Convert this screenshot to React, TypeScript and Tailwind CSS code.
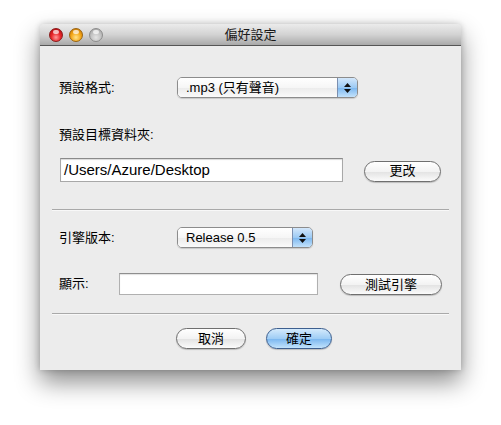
import React from "react";

const font = { fontFamily: '"Liberation Sans", "Noto Sans CJK TC", sans-serif' };

function Light({ kind }: { kind: "red" | "yellow" | "gray" }) {
  const cls =
    kind === "red"
      ? "bg-[radial-gradient(circle_at_50%_70%,#ff9a9a_0%,#e8262a_45%,#a8070c_100%)] border-[#8a1a1a]"
      : kind === "yellow"
      ? "bg-[radial-gradient(circle_at_50%_70%,#ffe38a_0%,#f3a413_50%,#b96a05_100%)] border-[#9a6410]"
      : "bg-[radial-gradient(circle_at_50%_70%,#e4e4e4_0%,#c2c2c2_50%,#9c9c9c_100%)] border-[#8c8c8c]";
  return (
    <div className={`relative w-[14px] h-[14px] rounded-full border ${cls}`}>
      <div className="absolute left-[3px] top-[1px] w-[6px] h-[4px] rounded-full bg-white/70" />
    </div>
  );
}

function Popup({ label, width }: { label: string; width: string }) {
  return (
    <div
      className={`${width} h-[21px] flex rounded-[5px] border border-[#8c8c8c] overflow-hidden shadow-[0_1px_1px_rgba(0,0,0,0.15)]`}
    >
      <div className="flex-1 flex items-center pl-[8px] text-[13px] text-black bg-[linear-gradient(#ffffff,#f6f6f6_50%,#ebebeb_51%,#fafafa)]">
        {label}
      </div>
      <div className="w-[20px] flex flex-col items-center justify-center gap-[2px] border-l border-[#7b8fb0] bg-[linear-gradient(#d3e7fb,#9ccaf4_50%,#7ab6ef_51%,#c3e2fb)]">
        <svg width="7" height="4" viewBox="0 0 7 4"><path d="M3.5 0 L7 4 L0 4 Z" fill="#111" /></svg>
        <svg width="7" height="4" viewBox="0 0 7 4"><path d="M0 0 L7 0 L3.5 4 Z" fill="#111" /></svg>
      </div>
    </div>
  );
}

function AquaButton({ label, width, blue }: { label: string; width: string; blue?: boolean }) {
  const cls = blue
    ? "border-[#3d5f8f] bg-[linear-gradient(#d4eafc,#9fcdf5_50%,#78b5ef_51%,#c2e3fc)]"
    : "border-[#6f6f6f] bg-[linear-gradient(#ffffff,#f3f3f3_50%,#e2e2e2_51%,#fbfbfb)]";
  return (
    <div
      className={`${width} h-[21px] rounded-full border flex items-center justify-center text-[13px] text-black shadow-[0_1px_1px_rgba(0,0,0,0.2)] ${cls}`}
    >
      {label}
    </div>
  );
}

function Separator() {
  return <div className="-mx-[7px] h-[1px] bg-[#a9a9a9] shadow-[0_1px_0_#f8f8f8]" />;
}

export default function App() {
  return (
    <div className="w-[501px] h-[425px] bg-white pt-[24px] pl-[40px]" style={font}>
      <div className="w-[421px] h-[346px] flex flex-col bg-[#ececec] shadow-[0_12px_24px_rgba(0,0,0,0.45),0_0_6px_rgba(0,0,0,0.2)] rounded-t-[4px] overflow-hidden">
        <div className="relative h-[22px] flex items-center justify-center bg-[linear-gradient(#ebebeb,#d3d3d3_50%,#a9a9a9)] border-b border-[#555555]">
          <div className="absolute left-[9px] top-[4px] flex gap-[6px]">
            <Light kind="red" />
            <Light kind="yellow" />
            <Light kind="gray" />
          </div>
          <span className="text-[13px] text-[#1a1a1a]">偏好設定</span>
        </div>
        <div className="flex-1 flex flex-col px-[19px] pt-[31px] text-[13px] text-black">
          <div className="flex items-center h-[21px]">
            <div className="w-[118px]">預設格式:</div>
            <Popup label=".mp3 (只有聲音)" width="w-[181px]" />
          </div>
          <div className="mt-[29px] h-[16px] leading-[16px]">預設目標資料夾:</div>
          <div className="mt-[15px] flex items-center">
            <div className="ml-[1px] w-[283px] h-[24px] bg-white border border-[#a8a8a8] border-t-[#8a8a8a] shadow-[inset_0_1px_1px_rgba(0,0,0,0.15)] flex items-center pl-[3px] text-[15px]">
              /Users/Azure/Desktop
            </div>
            <div className="ml-[21px] mt-[2px]">
              <AquaButton label="更改" width="w-[77px]" />
            </div>
          </div>
          <div className="mt-[27px]">
            <Separator />
          </div>
          <div className="mt-[17px] flex items-center h-[21px]">
            <div className="w-[118px]">引擎版本:</div>
            <Popup label="Release 0.5" width="w-[136px]" />
          </div>
          <div className="mt-[24px] flex items-center">
            <div className="w-[60px]">顯示:</div>
            <div className="w-[200px] h-[22px] bg-white border border-[#b0b0b0] border-t-[#8e8e8e] shadow-[inset_0_1px_1px_rgba(0,0,0,0.12)]" />
            <div className="ml-[22px] mt-[2px]">
              <AquaButton label="測試引擎" width="w-[102px]" />
            </div>
          </div>
          <div className="mt-[18px]">
            <Separator />
          </div>
          <div className="mt-[14px] flex">
            <div className="ml-[117px]">
              <AquaButton label="取消" width="w-[70px]" />
            </div>
            <div className="ml-[20px]">
              <AquaButton label="確定" width="w-[66px]" blue />
            </div>
          </div>
        </div>
      </div>
    </div>
  );
}
